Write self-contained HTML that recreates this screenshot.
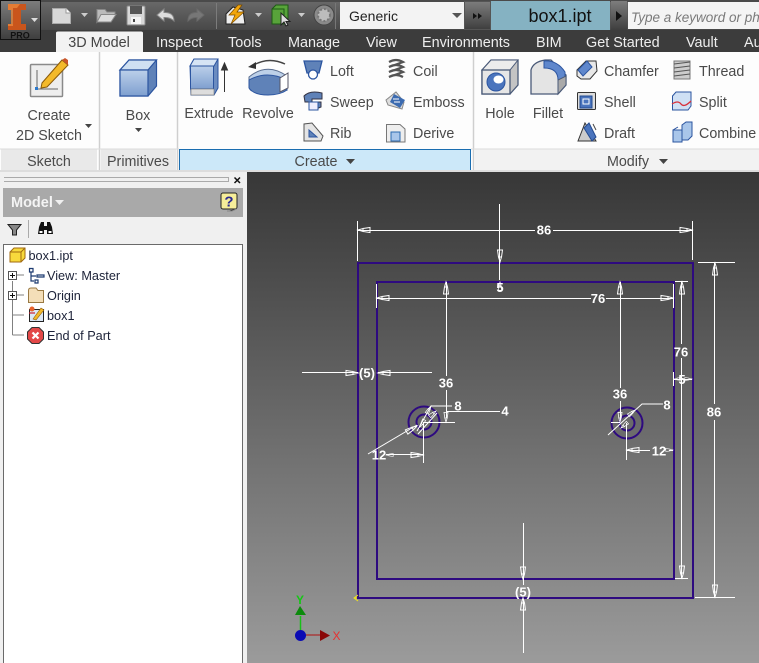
<!DOCTYPE html>
<html><head><meta charset="utf-8"><style>
html,body{margin:0;padding:0;width:759px;height:663px;overflow:hidden;background:#f0f0f0}
svg{display:block}
text{font-family:"Liberation Sans",sans-serif}
.t{font-size:14.400px;fill:#eee}
.r{font-size:14.300px;fill:#4a4a4a}
.c{text-anchor:middle}
.tr{font-size:12.700px;fill:#1c2238}
.d{font-size:13px;font-weight:bold;fill:#fff;text-anchor:middle}
.w{stroke:#fff;stroke-width:1;fill:none;shape-rendering:crispEdges}
.p{stroke:#2e0a80;stroke-width:2;fill:none}
</style></head><body>
<svg width="759" height="663" viewBox="0 0 759 663" xmlns="http://www.w3.org/2000/svg">
<defs>
<linearGradient id="tb" x1="0" y1="0" x2="0" y2="1"><stop offset="0" stop-color="#6a6a6a"/><stop offset="1" stop-color="#484848"/></linearGradient>
<linearGradient id="cv" x1="0" y1="0" x2="0" y2="1"><stop offset="0" stop-color="#373737"/><stop offset="1" stop-color="#9b9b9b"/></linearGradient>
<linearGradient id="bl" x1="0" y1="0" x2="0" y2="1"><stop offset="0" stop-color="#bcd0ea"/><stop offset="1" stop-color="#7e9fcf"/></linearGradient>
<linearGradient id="btn" x1="0" y1="0" x2="0" y2="1"><stop offset="0" stop-color="#7d7d7d"/><stop offset="1" stop-color="#3e3e3e"/></linearGradient>
<path id="a" d="M0 0L5-1.500V1.500ZM5-1.500L12-2.500V2.500L5 1.500Z" fill="none" stroke="#fff" stroke-width="1"/>
</defs>

<!-- title bar -->
<rect width="759" height="30" fill="url(#tb)"/>
<rect y="0" width="759" height="2" fill="#4a4a4a"/>
<path d="M216.500 3V29" stroke="#7c7c7c"/>
<!-- qat icons -->
<path d="M52.500 8.500H66L70.500 13V23.500H52.500Z" fill="#d8d8d8" stroke="#aaa"/><path d="M66 8.500V13H70.500" fill="#fff" stroke="#999"/>
<path d="M81 13H88L84.500 17Z" fill="#ccc"/>
<path d="M97 9.500H105L107 12H115V15H101L97 22Z" fill="#bbb" stroke="#888"/><path d="M97 22L101 14.500H116L111 22Z" fill="#ddd" stroke="#888"/>
<rect x="127" y="6" width="18" height="19" rx="1" fill="#d8d8d8" stroke="#888"/><rect x="130" y="6" width="12" height="8" fill="#555"/><rect x="131" y="17" width="10" height="7" fill="#f4f4f4"/><rect x="133" y="19" width="2" height="3" fill="#444"/>
<path d="M157 15L164 9V12.500Q174 12 174 21Q170 17 164 17.500V21Z" fill="#ddd" stroke="#888"/>
<path d="M204 15L197 9V12.500Q188 12 188 21Q192 17 197 17.500V21Z" fill="#777" stroke="#6a6a6a"/>
<path d="M226 14L233 7 243 10 245 24H226Z" fill="#eee" stroke="#222"/><path d="M238 5L229 15H235L231 24 244 12H237L242 5Z" fill="#f2a60c" stroke="#7a4b00" stroke-width=".7"/>
<path d="M255 13H262L258.500 17Z" fill="#ccc"/>
<path d="M272 9L276 5H288V20L284 24H272Z" fill="#58a33a" stroke="#1d5a14"/><path d="M272 9H284V24" fill="none" stroke="#1d5a14"/>
<path d="M281 13V25L284 22 286 26 288 25 286 21.500H290Z" fill="#ddd" stroke="#222"/>
<path d="M298 13H305L301.500 17Z" fill="#ccc"/>
<circle cx="324" cy="15" r="10" fill="#8a8a8a" stroke="#444"/><circle cx="324" cy="15" r="6" fill="#bcbcbc" stroke="#777" stroke-dasharray="2 2" stroke-width="2"/>
<path d="M335.500 3V29" stroke="#777"/>
<!-- generic combo -->
<rect x="340" y="2" width="124" height="27" fill="#f3f3f3"/>
<text x="349" y="21" font-size="14" fill="#222">Generic</text>
<path d="M452 13H462L457 18Z" fill="#555"/>
<rect x="464.500" y="1.500" width="26" height="28" fill="url(#btn)" stroke="#555"/>
<path d="M473 13L477 16 473 19ZM478 13L482 16 478 19Z" fill="#111"/>
<rect x="491" y="1" width="119" height="29" fill="#85b2c2"/>
<text x="560" y="22" font-size="18" fill="#111" text-anchor="middle">box1.ipt</text>
<rect x="611" y="1" width="16" height="29" fill="url(#btn)"/>
<path d="M616 11L622 16 616 21Z" fill="#111"/>
<rect x="628" y="2" width="131" height="27" fill="#f4f4f4"/>
<text x="631" y="22" font-size="13.500" font-style="italic" fill="#7a7a7a">Type a keyword or phr</text>

<!-- tabs -->
<rect y="30" width="759" height="22" fill="#3c3c3c"/>
<path d="M56 52V33Q56 31.500 58 31.500H141Q143 31.500 143 33V52Z" fill="#f2f2f2"/>
<text x="99" y="47" class="c" font-size="14.400" fill="#444">3D Model</text>
<text x="156" y="47" class="t">Inspect</text>
<text x="228" y="47" class="t">Tools</text>
<text x="288" y="47" class="t">Manage</text>
<text x="366" y="47" class="t">View</text>
<text x="422" y="47" class="t">Environments</text>
<text x="536" y="47" class="t">BIM</text>
<text x="586" y="47" class="t">Get Started</text>
<text x="686" y="47" class="t">Vault</text>
<text x="744" y="47" class="t">Au</text>

<!-- app button -->
<rect x="0.500" y="0.500" width="40" height="39" fill="url(#btn)" stroke="#111"/>
<path d="M8 4H26V10H21V24H26V30H8V24H13V10H8Z" fill="#c9551c"/>
<path d="M8 4H20L17 8H13V26H8V24H11V10H8Z" fill="#ee8a3c" opacity=".75"/>
<path d="M31 18H38L34.500 22Z" fill="#ddd"/>
<text x="20" y="38.500" font-size="9" font-weight="bold" fill="#111" text-anchor="middle">PRO</text>

<!-- ribbon -->
<rect y="52" width="759" height="120" fill="#fdfdfd"/>
<rect x="1" y="149" width="96" height="21" fill="#e9e9e9"/>
<rect x="101" y="149" width="75" height="21" fill="#e9e9e9"/>
<rect x="475" y="149" width="284" height="21" fill="#f2f2f2"/>
<rect x="179.500" y="149.500" width="291" height="21" fill="#cce8f9" stroke="#1a6db0"/>
<path d="M99.500 52V171M177.500 52V171M473.500 52V171" stroke="#cfcfcf" stroke-width="1.500"/>
<path d="M0 149H179M471 149H759" stroke="#dcdcdc"/>
<rect y="170" width="759" height="2" fill="#ddd"/>

<!-- create 2D sketch icon -->
<rect x="30.500" y="64.500" width="32" height="32" rx="1" fill="#eee" stroke="#8a8a8a" stroke-width="1.500"/>
<path d="M37 70V89H58" stroke="#666" fill="none"/><rect x="35" y="87" width="3" height="3" fill="#2a78cc"/>
<path d="M42 83L62 60 68 65 47 87 41 88Z" fill="#f3b92a" stroke="#8a5a0a"/><path d="M62 60L65 58 68 60 68 65Z" fill="#c9552a"/>
<text x="49" y="120" class="r c">Create</text>
<text x="49" y="140" class="r c">2D Sketch</text>
<path d="M85 124H92L88.500 128Z" fill="#444"/>
<text x="49" y="166" class="r c">Sketch</text>

<!-- box icon -->
<path d="M120 70L129 60H156.500V86L148 96H120Z" fill="#5f82b8" stroke="#2c55a0" stroke-width="1.200"/>
<path d="M120 70L129 60H156.500L148 70Z" fill="#cfe0f2" stroke="#2c55a0" stroke-width="1.200"/>
<rect x="120" y="70" width="28" height="26" fill="url(#bl)" stroke="#2c55a0" stroke-width="1.200"/>
<text x="138" y="120" class="r c">Box</text>
<path d="M135 128H142L138.500 132Z" fill="#444"/>
<text x="138" y="166" class="r c">Primitives</text>

<!-- extrude -->
<path d="M190 66L194 59H218V88L214 95H191Z" fill="#6b8cc0" stroke="#2c55a0"/>
<rect x="190.500" y="66" width="23" height="23" fill="url(#bl)" stroke="#2c55a0"/>
<rect x="191" y="89" width="23" height="6" fill="#ddd" stroke="#777" stroke-width=".6"/>
<path d="M190 66L194 59H218L214 66Z" fill="#d6e4f4" stroke="#2c55a0"/>
<path d="M224.500 92V66M221.500 70L224.500 63 227.500 70Z" stroke="#333" fill="#333"/>
<text x="209" y="118" class="r c">Extrude</text>
<!-- revolve -->
<path d="M252 66Q268 56 285 64" stroke="#444" stroke-width="1.500" fill="none"/><path d="M248 67L256 62 256 69Z" fill="#333"/>
<path d="M249 77Q267 62 287 76V90Q268 80 252 91 249 90 249 85Z" fill="#bdd0e8" stroke="#5a6e90"/>
<path d="M249 80Q267 70 287 80V90Q280 95 268 95 254 95 249 88Z" fill="#5f82b8" stroke="#2c55a0"/>
<path d="M280 78L288 73V88L280 92Z" fill="#fff" stroke="#556"/>
<text x="268" y="118" class="r c">Revolve</text>
<!-- loft sweep rib -->
<path d="M304 61H322L319 73H307Z" fill="#5f82b8" stroke="#2c55a0" stroke-width="1.300"/><circle cx="313" cy="74.500" r="4.500" fill="#fff" stroke="#2c55a0" stroke-width="1.300"/>
<text x="330" y="76" class="r">Loft</text>
<path d="M304 96Q310 90 322 93V99H312V102H321V107L316 109H310V102H305Z" fill="#5f82b8" stroke="#334" stroke-width="1"/><rect x="309" y="102" width="9" height="8" fill="#eef" stroke="#2c55a0"/>
<text x="330" y="107" class="r">Sweep</text>
<path d="M304 124V141H321L323 136 312 123Z" fill="#e4e4e4" stroke="#555"/><path d="M309 130L317 137H309Z" fill="#5f82b8" stroke="#2c55a0"/>
<text x="330" y="138" class="r">Rib</text>
<!-- coil emboss derive -->
<path d="M389 62Q396 58 403 62L389 67Q396 63 403 67L389 72Q396 68 403 72L389 77Q396 73 403 77" stroke="#555" stroke-width="2.200" fill="none"/>
<text x="413" y="76" class="r">Coil</text>
<path d="M386 100L396 92 404 102 402 109 388 105Z" fill="#ddd" stroke="#888"/><path d="M394 94L405 100 400 108 390 102Z" fill="#3c6bb0"/><path d="M393 99H399M394 102H400" stroke="#fff"/>
<text x="413" y="107" class="r">Emboss</text>
<path d="M386.500 124.500H400L405 129V142H386.500Z" fill="#eee" stroke="#777"/><rect x="391" y="132" width="9" height="9" fill="#a9c6ea" stroke="#2c6bb0"/>
<text x="413" y="138" class="r">Derive</text>
<text x="316" y="166" class="r c">Create</text>
<path d="M346 159H355L350.500 164Z" fill="#444"/>

<!-- hole -->
<path d="M482 70L491 60H518V85L510 94H482Z" fill="#c4c4c4" stroke="#4a5a78" stroke-width="1.300"/>
<path d="M482 70L491 60H518L510 70Z" fill="#ececec" stroke="#4a5a78"/>
<rect x="482" y="70" width="28" height="24" fill="#e6e6e6" stroke="#4a5a78" stroke-width="1.300"/>
<circle cx="496" cy="82" r="9" fill="#4a74bd" stroke="#2c55a0"/><ellipse cx="498.500" cy="79.500" rx="5" ry="4" fill="#fff"/>
<text x="500" y="118" class="r c">Hole</text>
<!-- fillet -->
<path d="M531 94V70Q533 62 545 60H551L566 75V85L558 94Z" fill="#e4e4e4" stroke="#4a5a78" stroke-width="1.300"/>
<path d="M544 61Q557 60 565 72V80L558 80Q558 68 544 68Z" fill="#5f87cc" stroke="#2c55a0"/>
<path d="M558 80V94L566 85V76Z" fill="#aaa" stroke="#4a5a78"/>
<text x="548" y="118" class="r c">Fillet</text>
<!-- chamfer shell draft -->
<path d="M577 70L586 61H596L597 71 590 79H581L577 76Z" fill="#e8e8e8" stroke="#333"/><path d="M578 70L587 61 592 67 583 76Z" fill="#5f87cc" stroke="#2c55a0"/>
<text x="604" y="76" class="r">Chamfer</text>
<rect x="577.500" y="92.500" width="18" height="17" rx="1" fill="#ddd" stroke="#333"/><rect x="580" y="96" width="12" height="12" fill="#4a74bd" stroke="#234a90"/><path d="M583 99H589V104H583Z" fill="none" stroke="#fff"/>
<text x="604" y="107" class="r">Shell</text>
<path d="M578 141L585 123 596 141Z" fill="#ccc" stroke="#333"/><path d="M584 128L589 123 596 137 592 141Z" fill="#4a74bd" stroke="#234a90"/><path d="M593 124L596 130" stroke="#444"/>
<text x="604" y="138" class="r">Draft</text>
<!-- thread split combine -->
<rect x="674" y="61" width="16" height="18" fill="#ccc" stroke="#777"/><path d="M674 64L690 62M674 68L690 66M674 72L690 70M674 76L690 74" stroke="#555"/>
<text x="699" y="76" class="r">Thread</text>
<path d="M672.500 96L676 92H691V106L688 110H672.500Z" fill="#cfe0f4" stroke="#2c55a0"/><path d="M672 104Q678 100 681 104T691 101" stroke="#d8303a" stroke-width="1.300" fill="none"/>
<text x="699" y="107" class="r">Split</text>
<path d="M673 130H682V125L686 122H692V136L688 140H682V142H673Z" fill="#a9c6ea" stroke="#2c55a0"/><path d="M682 130V140M673 130L678 127" stroke="#2c55a0"/>
<text x="699" y="138" class="r">Combine</text>
<text x="628" y="166" class="r c">Modify</text>
<path d="M659 159H668L663.500 164Z" fill="#444"/>

<!-- left panel -->
<rect y="172" width="247" height="491" fill="#f0f0f0"/>
<path d="M4 177.500H228M4 181.500H228M228.500 177V182" stroke="#aaa"/>
<path d="M234.500 177.500L240 183M240 177.500L234.500 183" stroke="#111" stroke-width="1.500"/>
<rect x="3" y="188" width="240" height="29" fill="#a9a9a9"/>
<text x="11" y="207" font-size="14.500" font-weight="bold" fill="#f4f4f4">Model</text>
<path d="M55 200H64L59.500 205Z" fill="#f0f0f0"/>
<rect x="221" y="193" width="16" height="16" rx="2" fill="#f6ee9a" stroke="#222"/><path d="M236.500 209L232 211H227" stroke="#888"/>
<text x="229" y="206.500" font-size="15" font-weight="bold" fill="#2a2a90" text-anchor="middle">?</text>
<path d="M8 224.500H21L16.500 230V235H12.500V230Z" fill="#888" stroke="#222"/>
<path d="M28.500 220V238" stroke="#aaa"/>
<path d="M38 234L39 227 41 222H44V234ZM47 234V222H50L52 227 53 234Z" fill="#111"/><rect x="44" y="226" width="3" height="4" fill="#111"/><rect x="39.500" y="231" width="3" height="2" fill="#fff"/><rect x="48.500" y="231" width="3" height="2" fill="#fff"/>
<rect x="3.500" y="244.500" width="239" height="430" fill="#fff" stroke="#6a6a6a"/>
<path d="M12.500 281V335M12.500 335H24M12.500 315H24M17 275H24M17 295H24" stroke="#808080" fill="none"/>
<rect x="8.500" y="271.500" width="8" height="8" fill="#fff" stroke="#555"/><path d="M10 275.500H15M12.500 273V278" stroke="#111"/>
<rect x="8.500" y="291.500" width="8" height="8" fill="#fff" stroke="#555"/><path d="M10 295.500H15M12.500 293V298" stroke="#111"/>
<!-- tree icons -->
<path d="M10 252L14 248H25V258L21 262H10Z" fill="#f7d93c" stroke="#a06a10"/><path d="M10 252H21V262M21 252L25 248" fill="none" stroke="#a06a10"/>
<path d="M29.500 268.500H33V272H29.500ZM31 272V281H34M31 276H36M37 275H44V277H37ZM35 280H38V283H35Z" fill="none" stroke="#1c3a70" stroke-width="1.200"/>
<path d="M28.500 290.500Q28.500 288 31 288H36L38 290.500H43.500V302.500H28.500Z" fill="#f4deb8" stroke="#9a7a44"/>
<rect x="29.500" y="309.500" width="14" height="12" fill="#dbe7f5" stroke="#222"/><path d="M33 319L41 308 44 310 36 320Z" fill="#f2b82a" stroke="#8a5a0a" stroke-width=".6"/><circle cx="32" cy="309" r="2.500" fill="#e8622c"/><path d="M29 313H35" stroke="#c23" stroke-width="1.200"/>
<path d="M32 327.500H39L43.500 332V339L39 343.500H32L27.500 339V332Z" fill="#e34848" stroke="#333"/><path d="M32.500 332.500L38.500 338.500M38.500 332.500L32.500 338.500" stroke="#fff" stroke-width="2.200"/>
<text x="28.500" y="260" class="tr">box1.ipt</text>
<text x="47" y="280" class="tr">View: Master</text>
<text x="47" y="300" class="tr">Origin</text>
<text x="47" y="320" class="tr">box1</text>
<text x="47" y="340" class="tr">End of Part</text>

<!-- canvas -->
<rect x="247" y="172" width="512" height="491" fill="url(#cv)"/>
<rect x="358" y="263" width="335" height="335" class="p"/>
<rect x="377" y="282" width="297" height="297" class="p"/>
<circle cx="424" cy="422" r="15.500" class="p"/><circle cx="424" cy="422" r="7.500" class="p"/>
<circle cx="627" cy="423" r="15.500" class="p"/><circle cx="627" cy="423" r="7.500" class="p"/>

<!-- dims: horizontal 86 -->
<path class="w" d="M357.500 221V261M692.500 221V260M358 230.500H535M553 230.500H692"/>
<use href="#a" transform="translate(358 230)"/><use href="#a" transform="translate(692 230) rotate(180)"/>
<text x="544" y="234.500" class="d">86</text>
<!-- 5 top -->
<path class="w" d="M499.500 204V280"/>
<use href="#a" transform="translate(500 262) rotate(-90)"/><use href="#a" transform="translate(500 282) rotate(90) scale(.7)"/>
<text x="500" y="292" class="d">5</text>
<!-- 76 horizontal -->
<path class="w" d="M376.500 284V308M673.500 284V308M377 298.500H591M606 298.500H673"/>
<use href="#a" transform="translate(377 298)"/><use href="#a" transform="translate(673 298) rotate(180)"/>
<text x="598" y="303" class="d">76</text>
<!-- 36 left -->
<path class="w" d="M446.500 282V376M446.500 390V418M423 422.500H455"/>
<use href="#a" transform="translate(446 282) rotate(90)"/><use href="#a" transform="translate(446 422) rotate(-90) scale(.8)"/>
<text x="446" y="387.500" class="d">36</text>
<!-- 8 / 4 leaders left -->
<path d="M417 431L431 406H452M446 411.500H500" stroke="#fff" fill="none"/>
<text x="458" y="410.500" class="d">8</text><text x="505" y="415.500" class="d">4</text>
<path d="M418 434L437 413" stroke="#fff" stroke-width="1"/>
<use href="#a" transform="translate(431 406) rotate(120) scale(.7)"/><use href="#a" transform="translate(436 411) rotate(140) scale(.7)"/>
<use href="#a" transform="translate(420 427) rotate(-60) scale(.7)"/>
<!-- 12 left -->
<path d="M368 454L417 425" stroke="#fff"/>
<path class="w" d="M423.500 422V463M386 454.500H423"/>
<use href="#a" transform="translate(423 455) rotate(180)"/><use href="#a" transform="translate(386 455) scale(.6)"/>
<use href="#a" transform="translate(417 426) rotate(150)"/>
<text x="379" y="459.500" class="d">12</text>
<!-- (5) left -->
<path class="w" d="M302 372.500H358M378 372.500H432"/>
<use href="#a" transform="translate(358 373) rotate(180)"/><use href="#a" transform="translate(378 373)"/>
<text x="367" y="377.500" class="d">(5)</text>
<!-- right hole -->
<path class="w" d="M620.500 282V388M620.500 401V420M611 422.500H620M626.500 423V460M627 450.500H650M669 450.500H673"/>
<use href="#a" transform="translate(620 282) rotate(90)"/><use href="#a" transform="translate(620 422) rotate(-90) scale(.8)"/>
<use href="#a" transform="translate(627 450)"/>
<use href="#a" transform="translate(673 450) rotate(180) scale(.6)"/>
<text x="620" y="398.500" class="d">36</text>
<path d="M608 435L642 404H663" stroke="#fff" fill="none"/>
<text x="667" y="409.500" class="d">8</text>
<use href="#a" transform="translate(635 410) rotate(140) scale(.7)"/><use href="#a" transform="translate(621 428) rotate(-40) scale(.7)"/>
<text x="659" y="455.500" class="d">12</text>
<!-- 5 right -->
<path class="w" d="M673.500 372V386M674 379.500H692"/>
<use href="#a" transform="translate(674 379) scale(.6)"/><use href="#a" transform="translate(692 379) rotate(180) scale(.6)"/>
<text x="682" y="384" class="d">5</text>
<!-- 76 vert -->
<path class="w" d="M675 281.500H688M675 578.500H688M681.500 282V344M681.500 358V578"/>
<use href="#a" transform="translate(682 282) rotate(90)"/><use href="#a" transform="translate(682 578) rotate(-90)"/>
<text x="681" y="356.500" class="d">76</text>
<!-- 86 vert -->
<path class="w" d="M698 262.500H735M695 597.500H735M714.500 263V404M714.500 420V597"/>
<use href="#a" transform="translate(715 263) rotate(90)"/><use href="#a" transform="translate(715 597) rotate(-90)"/>
<text x="714" y="416.500" class="d">86</text>
<!-- (5) bottom -->
<path class="w" d="M523.500 523V585M523.500 600V653"/>
<use href="#a" transform="translate(523 579) rotate(-90)"/><use href="#a" transform="translate(523 598) rotate(90)"/>
<text x="523" y="596.500" class="d">(5)</text>
<!-- origin marker -->
<path d="M358 595L354 598 358 601M354 598H357" stroke="#f2e41c" fill="none"/>
<!-- triad -->
<path d="M300.500 634V616" stroke="#18c018" stroke-width="1.500"/>
<path d="M300 606L306 615H295Z" fill="#0c8a0c"/>
<path d="M300 635H321" stroke="#b01010" stroke-width="1"/>
<path d="M320 630L330 635.500 320 641Z" fill="#8a0808"/>
<circle cx="300.500" cy="635.500" r="5.500" fill="#0b0bb4"/>
<text x="300" y="604" font-size="12" font-weight="bold" fill="#14c814" text-anchor="middle">Y</text>
<text x="336.500" y="640" font-size="12" fill="#e83030" text-anchor="middle">X</text>
</svg>
</body></html>
